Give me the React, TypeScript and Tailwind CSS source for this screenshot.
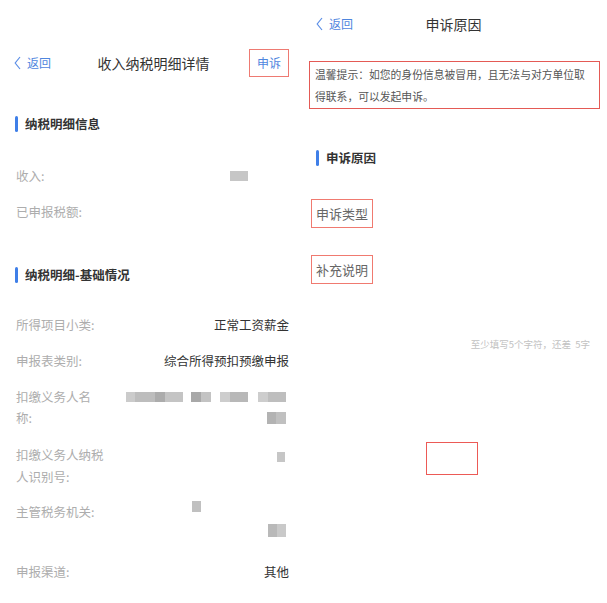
import React from 'react'

const FONT = { fontFamily: '"Noto Sans CJK SC", "Noto Sans", sans-serif' }

function Back() {
  return (
    <div className="flex items-center gap-[6px] text-[12px] text-[#4f86de]">
      <svg width="7" height="14" viewBox="0 0 7 14" fill="none">
        <path d="M6 1L1.2 7L6 13" stroke="#5b8ee6" strokeWidth="1.2" />
      </svg>
      <span>返回</span>
    </div>
  )
}

function SectionTitle({ text }: { text: string }) {
  return (
    <div className="flex items-center h-[16px]">
      <div className="w-[3px] h-[16px] rounded-full bg-[#3f7fe8]" />
      <span className="ml-[7px] text-[12.5px] font-bold text-[#333]">{text}</span>
    </div>
  )
}

function Blk({ w, h, c = '#c6c6c6' }: { w: string; h: string; c?: string }) {
  return <span className={`${w} ${h} inline-block`} style={{ background: c }} />
}

function Row({
  label,
  mt,
  children,
}: {
  label: React.ReactNode
  mt: string
  children?: React.ReactNode
}) {
  return (
    <div className={`flex ${mt} text-[12.5px] leading-[22px]`}>
      <div className="w-[88px] shrink-0 text-[#adadad]">{label}</div>
      <div className="flex-1 flex flex-col items-end text-[#333]">{children}</div>
    </div>
  )
}

function LeftPanel() {
  return (
    <div className="w-[300px] shrink-0 pt-[49px] pl-[16px] pr-[11px]">
      <div className="grid grid-cols-[1fr_auto_1fr] items-center h-[28px] -ml-[2px]">
        <Back />
        <div className="text-[14px] text-[#333] pl-[4px]">收入纳税明细详情</div>
        <div className="flex justify-end">
          <div className="w-[40px] h-[28px] border border-[#ee7a72] flex items-center justify-center text-[12px] text-[#4f86de]">
            申诉
          </div>
        </div>
      </div>

      <div className="mt-[39px] -ml-[1px]">
        <SectionTitle text="纳税明细信息" />
      </div>

      <Row label="收入:" mt="mt-[33px]">
        <div className="h-[22px] flex items-center mr-[41px]">
          <Blk w="w-[18px]" h="h-[10px]" />
        </div>
      </Row>
      <Row label="已申报税额:" mt="mt-[14px]" />

      <div className="mt-[44px] -ml-[1px]">
        <SectionTitle text="纳税明细-基础情况" />
      </div>

      <Row label="所得项目小类:" mt="mt-[31px]">
        <span>正常工资薪金</span>
      </Row>
      <Row label="申报表类别:" mt="mt-[14px]">
        <span>综合所得预扣预缴申报</span>
      </Row>
      <div className="flex mt-[14px] text-[12.5px] leading-[21px]">
        <div className="w-[88px] shrink-0 text-[#adadad]">扣缴义务人名称:</div>
        <div className="flex-1 flex flex-col items-end">
          <div className="h-[21px] flex items-center mr-[3px]">
            <Blk w="w-[9px]" h="h-[10px]" c="#cbcbcb" />
            <Blk w="w-[20px]" h="h-[10px]" c="#bdbdbd" />
            <Blk w="w-[10px]" h="h-[10px]" c="#acacac" />
            <Blk w="w-[18px]" h="h-[10px]" c="#c4c4c4" />
            <span className="w-[8px]" />
            <Blk w="w-[10px]" h="h-[10px]" c="#a8a8a8" />
            <Blk w="w-[10px]" h="h-[10px]" c="#c3c3c3" />
            <span className="w-[9px]" />
            <Blk w="w-[10px]" h="h-[10px]" c="#cdcdcd" />
            <Blk w="w-[18px]" h="h-[10px]" c="#b8b8b8" />
            <span className="w-[10px]" />
            <Blk w="w-[10px]" h="h-[10px]" c="#cdcdcd" />
            <Blk w="w-[18px]" h="h-[10px]" c="#bebebe" />
          </div>
          <div className="h-[21px] flex items-center mr-[3px]">
            <Blk w="w-[9px]" h="h-[12px]" c="#b3b3b3" />
            <Blk w="w-[10px]" h="h-[12px]" c="#c0c0c0" />
          </div>
        </div>
      </div>
      <div className="flex mt-[16px] text-[12.5px] leading-[22px]">
        <div className="w-[88px] shrink-0 text-[#adadad]">扣缴义务人纳税人识别号:</div>
        <div className="flex-1 flex flex-col items-end">
          <div className="mt-[8px] mr-[4px] flex">
            <Blk w="w-[8px]" h="h-[10px]" />
          </div>
        </div>
      </div>
      <div className="flex mt-[13px] text-[12.5px] leading-[22px]">
        <div className="w-[88px] shrink-0 text-[#adadad]">主管税务机关:</div>
        <div className="flex-1 flex flex-col items-end">
          <div className="mr-[88px] flex">
            <Blk w="w-[9px]" h="h-[11px]" c="#c0c0c0" />
          </div>
          <div className="mt-[12px] mr-[3px] flex">
            <Blk w="w-[9px]" h="h-[13px]" c="#b9b9b9" />
            <Blk w="w-[9px]" h="h-[13px]" c="#c9c9c9" />
          </div>
        </div>
      </div>
      <Row label="申报渠道:" mt="mt-[24px]">
        <span>其他</span>
      </Row>
    </div>
  )
}

function RightPanel() {
  return (
    <div className="w-[307px] shrink-0 pt-[10px]">
      <div className="grid grid-cols-[1fr_auto_1fr] items-center h-[28px] pl-[16px]">
        <Back />
        <div className="text-[14px] text-[#333] -ml-[16px]">申诉原因</div>
        <div />
      </div>

      <div className="mt-[23px] ml-[9px] w-[291px] border border-[#e45a55] px-[5px] py-[1px] text-[10.8px] leading-[22px] text-[#555]">
        温馨提示：如您的身份信息被冒用，且无法与对方单位取得联系，可以发起申诉。
      </div>

      <div className="mt-[41px] ml-[16px]">
        <SectionTitle text="申诉原因" />
      </div>

      <div className="mt-[33px] ml-[11px]">
        <div className="inline-flex items-center h-[29px] px-[4px] border-[1.5px] border-[#f07a70] text-[13px] text-[#666]">
          申诉类型
        </div>
      </div>
      <div className="mt-[27px] ml-[11px]">
        <div className="inline-flex items-center h-[29px] px-[4px] border-[1.5px] border-[#f07a70] text-[13px] text-[#666]">
          补充说明
        </div>
      </div>

      <div className="mt-[53px] flex justify-end pr-[17px] text-[9.5px] leading-[14px] text-[#c2c2c2]">
        至少填写5个字符，还差&nbsp;&nbsp;5字
      </div>

      <div className="mt-[91px] flex justify-center pr-[3px]">
        <div className="w-[52px] h-[33px] border-[1.5px] border-[#ec5a56]" />
      </div>
    </div>
  )
}

export default function App() {
  return (
    <div className="w-[607px] h-[603px] bg-white flex overflow-hidden" style={FONT}>
      <LeftPanel />
      <RightPanel />
    </div>
  )
}
